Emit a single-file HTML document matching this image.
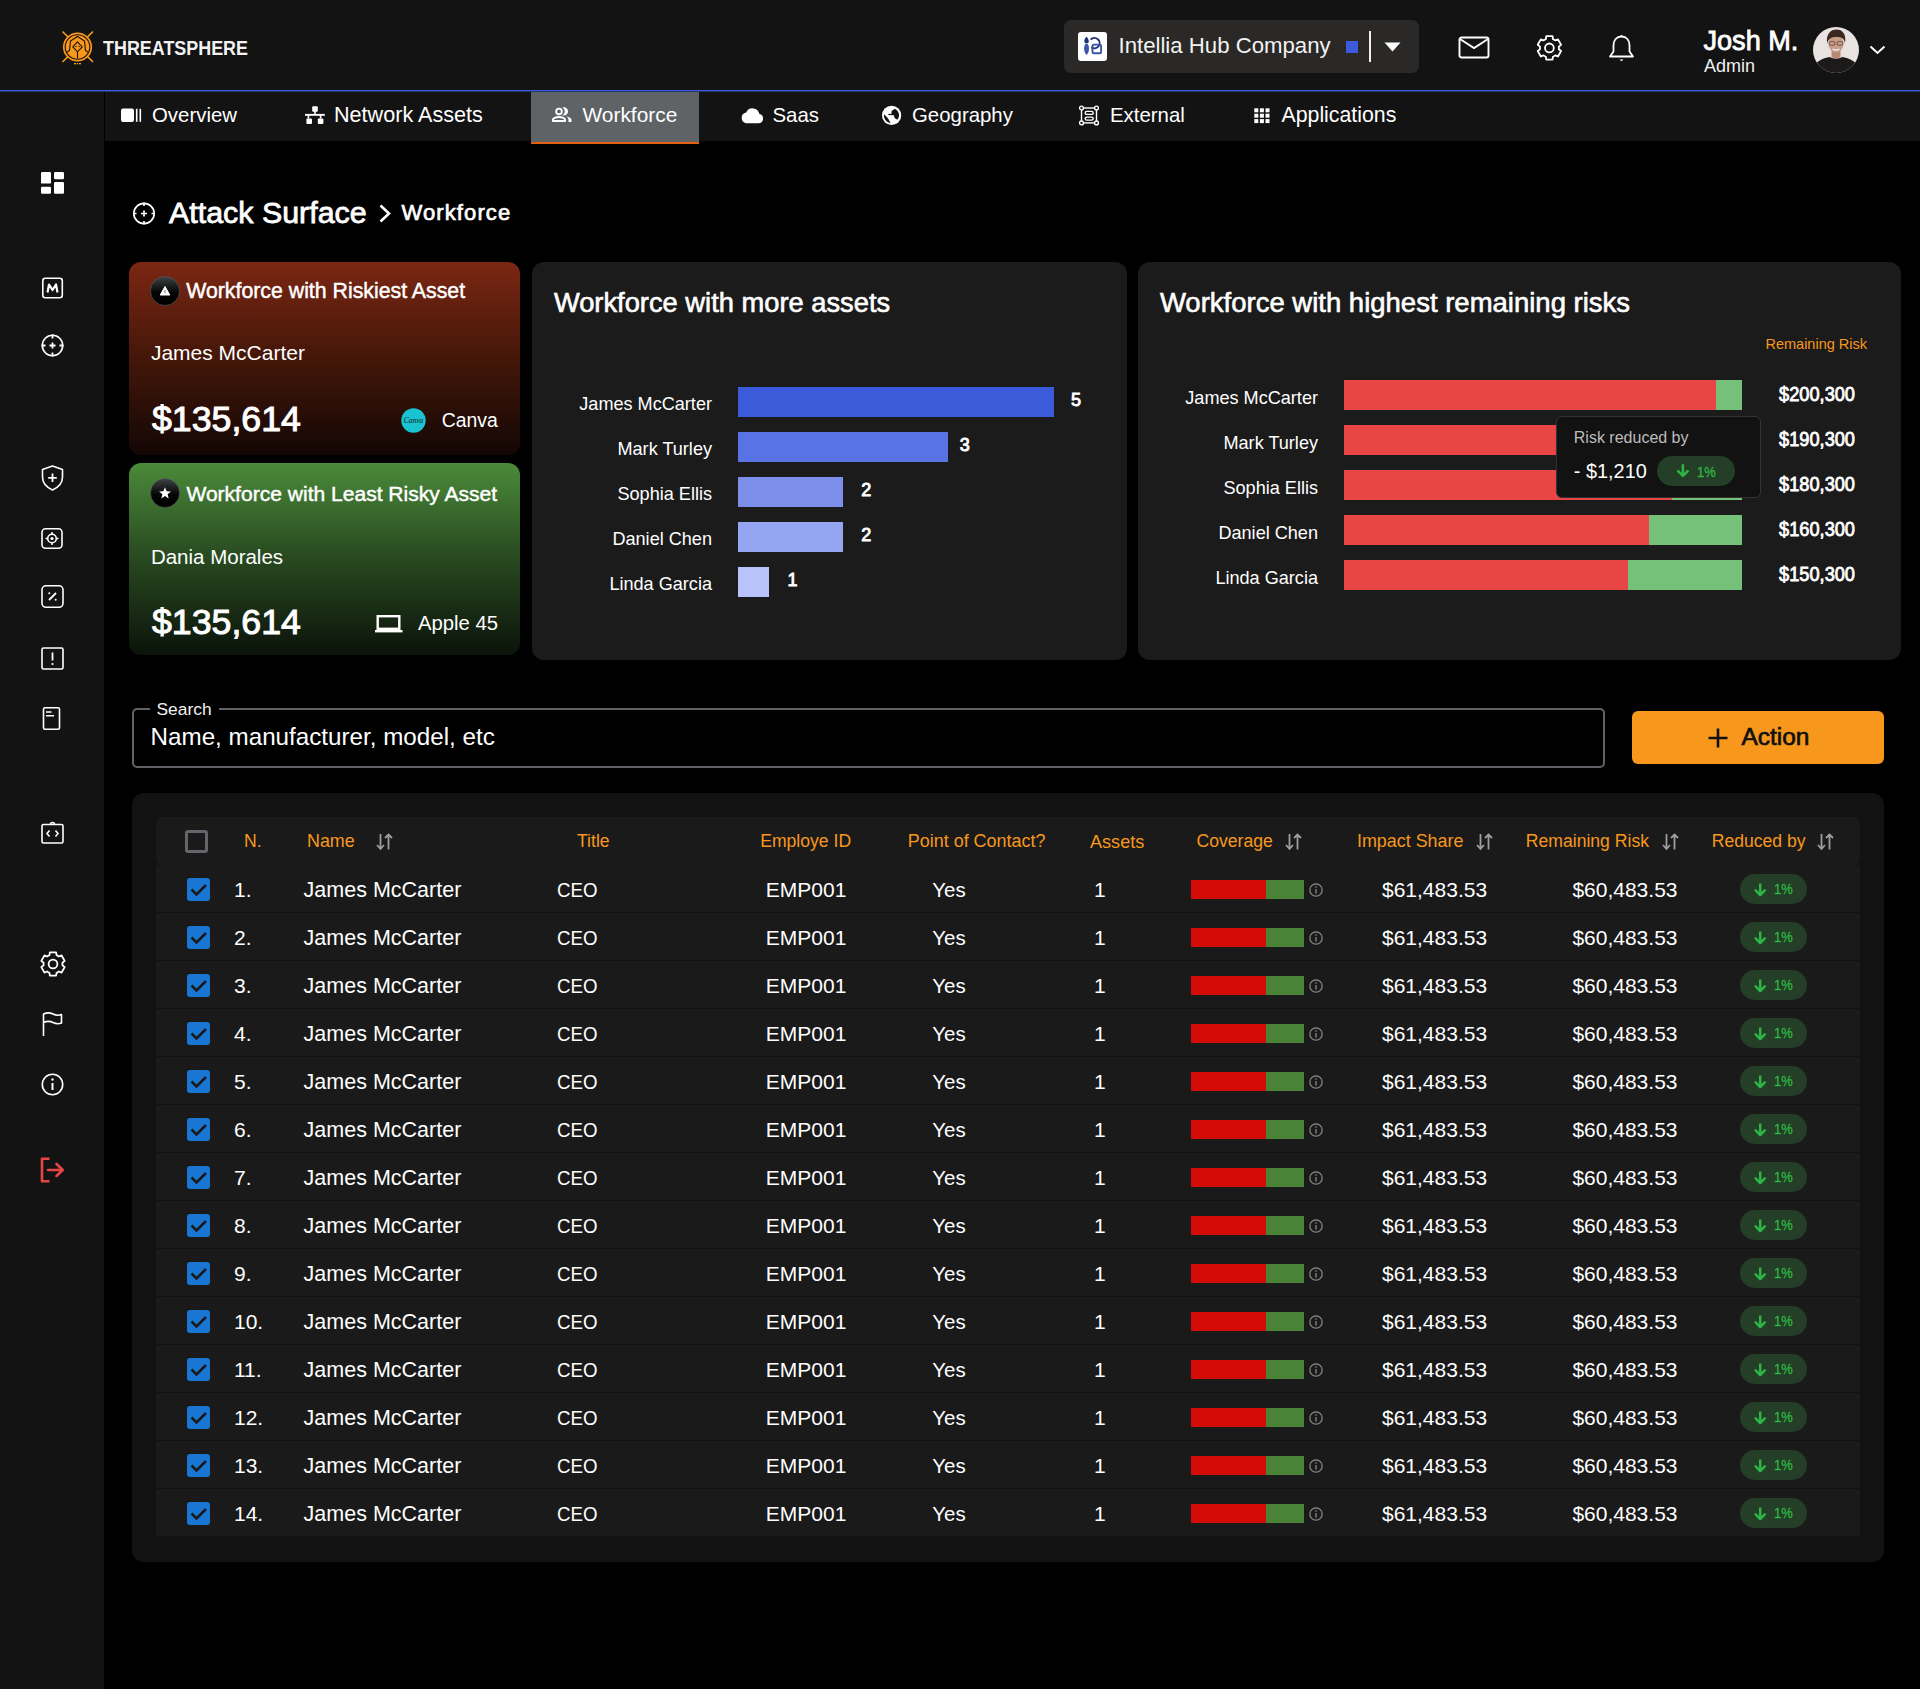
<!DOCTYPE html>
<html><head><meta charset="utf-8"><title>Workforce</title>
<style>
html,body{margin:0;padding:0;}
body{width:1920px;height:1689px;background:#000;position:relative;overflow:hidden;font-family:"Liberation Sans",sans-serif;color:#fff;}
.t{position:absolute;white-space:nowrap;}
.r{position:absolute;}
.m{-webkit-text-stroke:0.35px currentColor;}
</style></head><body>
<div class="r" style="left:0px;top:0px;width:1920px;height:90px;background:#131313;"></div>
<div class="r" style="left:0px;top:90px;width:1920px;height:1px;background:#3b5be0;"></div>
<div class="r" style="left:0px;top:91px;width:1920px;height:1px;background:#26346e;"></div>
<div class="r" style="left:0px;top:92px;width:104px;height:1597px;background:#131313;"></div>
<div class="r" style="left:105px;top:92px;width:1815px;height:49px;background:#131313;"></div>
<div class="r" style="left:531px;top:92px;width:168px;height:50px;background:#5f6366;"></div>
<div class="r" style="left:531px;top:142px;width:168px;height:2px;background:#e45f12;"></div>
<svg class="r" style="left:60px;top:28px;" width="36" height="40" viewBox="0 0 36 40">
<g stroke="#f7981d" stroke-width="1.7" stroke-linecap="round">
<line x1="3" y1="4" x2="32.5" y2="33.5"/><line x1="32.5" y1="4" x2="3" y2="33.5"/></g>
<circle cx="17.5" cy="19" r="14.6" fill="#f7981d"/>
<circle cx="17.5" cy="19" r="12.3" fill="none" stroke="#1a1108" stroke-width="1.1"/>
<path d="M6.5 24.5 L9.5 22.5 L10.5 13 L17.5 8.5 L24.5 13 L25.5 22.5 L28.5 24.5" fill="none" stroke="#1a1108" stroke-width="1.1"/>
<path d="M17.5 13.8 L22.2 19 L17.5 23.8 L12.8 19 Z" fill="none" stroke="#1a1108" stroke-width="1.1"/>
<rect x="15" y="18.2" width="1.6" height="0.8" fill="#1a1108"/><rect x="18.4" y="18.2" width="1.6" height="0.8" fill="#1a1108"/>
<line x1="17.5" y1="23.8" x2="17.5" y2="30.5" stroke="#1a1108" stroke-width="1.1"/>
<rect x="14" y="35" width="2" height="1.3" fill="#f7981d"/><rect x="16.8" y="35" width="1.4" height="1.3" fill="#f7981d"/><rect x="19" y="35" width="2" height="1.3" fill="#f7981d"/>
</svg>
<div class="t" style="top:38.35px;font-size:20.5px;line-height:20.5px;font-weight:700;color:#f2f2f2;left:103.00px;transform:scaleX(0.874);transform-origin:left;">THREATSPHERE</div>
<div class="r" style="left:1064px;top:20px;width:355px;height:53px;background:#2a2927;border-radius:7px;"></div>
<div class="r" style="left:1078px;top:32px;width:29px;height:29px;background:#fff;border-radius:3px;"></div>
<svg class="r" style="left:1078px;top:32px;" width="29" height="29" viewBox="0 0 29 29">
<path d="M8.6 4.8 C7 6.2 6.2 7.8 6.3 9.6 C6.4 10.6 7.2 11.3 8.5 11.4 C9.8 11.3 10.8 10.6 10.8 9.4 C10.8 7.8 9.8 6.2 8.6 4.8 Z" fill="#233270"/>
<path d="M8.5 11.6 C7 11.8 6.1 14 6.1 16.5 C6.1 19.5 7.4 22 8.6 22.8 C9.8 22 11 19.5 11 16.5 C11 14 10 11.8 8.5 11.6 Z" fill="#3f56a8"/>
<path d="M12.6 7.6 A5.2 5.2 0 1 1 13.2 15.2" fill="none" stroke="#26357a" stroke-width="1.9"/>
<rect x="14.5" y="12.6" width="8.6" height="8.6" rx="1.3" fill="none" stroke="#3b53a6" stroke-width="1.9"/>
</svg>
<div class="t" style="top:35.31px;font-size:22.2px;line-height:22.2px;color:#f2f2f2;left:1118.50px;">Intellia Hub Company</div>
<div class="r" style="left:1346px;top:41px;width:12px;height:12px;background:#3b5bdb;"></div>
<div class="r" style="left:1369px;top:31px;width:2px;height:31px;background:#f0f0f0;"></div>
<svg class="r" style="left:1384px;top:42px;" width="17" height="10" viewBox="0 0 17 10"><path d="M0.5 0.5 L16.5 0.5 L8.5 9.5 Z" fill="#fff"/></svg>
<svg class="r" style="left:1458px;top:36px;" width="32" height="23" viewBox="0 0 32 23"><rect x="1.5" y="1.5" width="29" height="20" rx="2" fill="none" stroke="#fff" stroke-width="1.9"/><path d="M2 3 L16 12 L30 3" fill="none" stroke="#fff" stroke-width="1.9"/></svg>
<svg class="r" style="left:1535px;top:34px;" width="29" height="28" viewBox="0 0 29 28"><g transform="translate(14.4 13.9)"><path d="M-3.56 -8.81 L-3.13 -11.69 L3.13 -11.69 L3.56 -8.81 A9.5 9.5 0 0 1 5.85 -7.49 L8.56 -8.56 L11.69 -3.13 L9.41 -1.32 A9.5 9.5 0 0 1 9.41 1.32 L11.69 3.13 L8.56 8.56 L5.85 7.49 A9.5 9.5 0 0 1 3.56 8.81 L3.13 11.69 L-3.13 11.69 L-3.56 8.81 A9.5 9.5 0 0 1 -5.85 7.49 L-8.56 8.56 L-11.69 3.13 L-9.41 1.32 A9.5 9.5 0 0 1 -9.41 -1.32 L-11.69 -3.13 L-8.56 -8.56 L-5.85 -7.49 A9.5 9.5 0 0 1 -3.56 -8.81 Z" fill="none" stroke="#fff" stroke-width="1.8" stroke-linejoin="round"/><circle r="4.4" fill="none" stroke="#fff" stroke-width="1.8"/></g></svg>
<svg class="r" style="left:1608px;top:34px;" width="27" height="28" viewBox="0 0 27 28"><path d="M13.5 2.5 c-5 0 -8 3.8 -8 8.5 v6.5 l-3.5 5 h23 l-3.5 -5 v-6.5 c0 -4.7 -3 -8.5 -8 -8.5z" fill="none" stroke="#fff" stroke-width="1.8" stroke-linejoin="round"/><path d="M11.5 25.5 h4 l-2 1.8z" fill="#fff"/><circle cx="13.5" cy="2" r="1" fill="#fff"/></svg>
<div class="t" style="top:26.86px;font-size:27.1px;line-height:27.1px;left:1703.50px;-webkit-text-stroke:0.8px currentColor;">Josh M.</div>
<div class="t" style="top:56.66px;font-size:18px;line-height:18px;color:#f0f0f0;left:1704.00px;">Admin</div>
<svg class="r" style="left:1813px;top:27px;" width="46" height="46" viewBox="0 0 46 46">
<defs><clipPath id="av"><circle cx="23" cy="23" r="23"/></clipPath></defs>
<g clip-path="url(#av)">
<rect width="46" height="46" fill="#e8e3e1"/>
<path d="M0 46 V39 C5 33.5 11 31 16.5 30 Q23 33 29.5 30 C35 31 41 33.5 46 39 V46 Z" fill="#1c1a1a"/>
<path d="M18.5 22 L18.5 30 Q23 33.5 27.5 30 L27.5 22 Z" fill="#b88a74"/>
<ellipse cx="23" cy="16.5" rx="7.6" ry="9" fill="#c99e89"/>
<path d="M14.2 16.5 C12.8 7 17.5 2.5 23.5 2.5 C29.5 2.5 33.5 7 32 16 C31 11.5 29 10 23.5 10 C18 10 15.5 11.5 14.2 16.5 Z" fill="#3a2820"/>
<rect x="16.3" y="14.6" width="5.6" height="3.6" rx="1" fill="none" stroke="#4a3a34" stroke-width="0.7"/>
<rect x="24.1" y="14.6" width="5.6" height="3.6" rx="1" fill="none" stroke="#4a3a34" stroke-width="0.7"/>
<path d="M19.5 22 q3.5 2.2 7 0" stroke="#f4f0ee" stroke-width="1.3" fill="none"/>
</g></svg>
<svg class="r" style="left:1869px;top:45px;" width="17" height="10" viewBox="0 0 17 10"><path d="M1.5 1.5 L8.5 8 L15.5 1.5" fill="none" stroke="#fff" stroke-width="2"/></svg>
<svg class="r" style="left:120px;top:107px;" width="24" height="17" viewBox="0 0 24 17"><rect x="1" y="1.6" width="13" height="13.4" rx="2" fill="#fff"/><rect x="15.9" y="1.8" width="1.6" height="13" fill="#fff"/><rect x="19.5" y="1.8" width="1.6" height="13" fill="#fff"/></svg>
<div class="t" style="top:105.43px;font-size:20.4px;line-height:20.4px;left:152.00px;">Overview</div>
<svg class="r" style="left:304px;top:105px;" width="22" height="20" viewBox="0 0 22 20"><rect x="8.2" y="1.2" width="5.6" height="5.5" rx="1" fill="#fff"/><rect x="10.2" y="6" width="1.6" height="3" fill="#fff"/><rect x="1" y="8.9" width="19.8" height="1.9" fill="#fff"/><rect x="3.6" y="10" width="1.6" height="3.6" fill="#fff"/><rect x="15.8" y="10" width="1.6" height="3.6" fill="#fff"/><rect x="2.4" y="13.6" width="5.6" height="5.3" rx="1" fill="#fff"/><rect x="13.8" y="13.6" width="5.6" height="5.3" rx="1" fill="#fff"/></svg>
<div class="t" style="top:104.42px;font-size:21.6px;line-height:21.6px;left:334.00px;">Network Assets</div>
<svg class="r" style="left:550px;top:104px;" width="24" height="20" viewBox="0 0 24 20"><circle cx="9" cy="7.4" r="2.8" fill="none" stroke="#fff" stroke-width="1.9"/>
<path d="M13.8 3.8 A3.6 3.6 0 0 1 13.8 11 A5 5 0 0 0 13.8 3.8Z" fill="#fff" stroke="#fff" stroke-width="1.2"/>
<path d="M2.9 17 v-1.2 c0 -1.2 2.8 -2.8 6.1 -2.8 s6.1 1.6 6.1 2.8 v1.2 z" fill="none" stroke="#fff" stroke-width="1.9" stroke-linejoin="round"/>
<path d="M16.4 12.4 c3 0.5 5.1 1.8 5.1 3.5 v2.1 h-3 v-2.3 c0 -1.3 -0.8 -2.4 -2.1 -3.3z" fill="#fff"/></svg>
<div class="t" style="top:105.01px;font-size:20.9px;line-height:20.9px;left:582.50px;">Workforce</div>
<svg class="r" style="left:740px;top:106px;" width="24" height="19" viewBox="0 0 24 19"><path d="M6 17.2 h12.6 a4.6 4.6 0 0 0 0.8 -9.1 a7 7 0 0 0 -13.3 -1.5 a5.4 5.4 0 0 0 -0.1 10.6z" fill="#fff"/></svg>
<div class="t" style="top:105.43px;font-size:20.4px;line-height:20.4px;left:772.50px;">Saas</div>
<svg class="r" style="left:880px;top:104px;" width="23" height="23" viewBox="0 0 23 23"><circle cx="11.6" cy="11.4" r="9.6" fill="#fff"/><path d="M3.9 10.2 A7.8 7.8 0 0 0 10.6 19.2 C9.8 17 8.6 15 7.2 13.4 C6.2 12.2 5 11 3.9 10.2 Z" fill="#131313"/><path d="M8.2 10.9 L8.6 9.8 L11.4 9.9 L11.6 7.1 L14.9 4.8 C16.8 5.8 18.3 7.6 18.9 9.8 C19.4 12 18.8 14 17.4 15.8 L14.5 14 L14 11.2 Z" fill="#131313"/></svg>
<div class="t" style="top:105.43px;font-size:20.4px;line-height:20.4px;left:912.00px;">Geography</div>
<svg class="r" style="left:1077px;top:103px;" width="24" height="24" viewBox="0 0 24 24"><g fill="none" stroke="#fff" stroke-width="1.4">
<rect x="4.5" y="5" width="15" height="14.9"/>
<circle cx="4.5" cy="5" r="1.9" fill="#131313"/><circle cx="19.5" cy="5" r="1.9" fill="#131313"/><circle cx="4.5" cy="19.9" r="1.9" fill="#131313"/><circle cx="19.5" cy="19.9" r="1.9" fill="#131313"/>
<rect x="8.2" y="8.4" width="8" height="3" rx="1.5"/><rect x="8.2" y="14.1" width="8" height="3" rx="1.5"/></g></svg>
<div class="t" style="top:105.43px;font-size:20.4px;line-height:20.4px;left:1110.00px;">External</div>
<svg class="r" style="left:1254px;top:108px;" width="16" height="16" viewBox="0 0 16 16"><rect x="0.3" y="0.3" width="4" height="4" fill="#fff"/><rect x="0.3" y="5.7" width="4" height="4" fill="#fff"/><rect x="0.3" y="11.1" width="4" height="4" fill="#fff"/><rect x="5.9" y="0.3" width="4" height="4" fill="#fff"/><rect x="5.9" y="5.7" width="4" height="4" fill="#fff"/><rect x="5.9" y="11.1" width="4" height="4" fill="#fff"/><rect x="11.5" y="0.3" width="4" height="4" fill="#fff"/><rect x="11.5" y="5.7" width="4" height="4" fill="#fff"/><rect x="11.5" y="11.1" width="4" height="4" fill="#fff"/></svg>
<div class="t" style="top:104.67px;font-size:21.3px;line-height:21.3px;left:1281.50px;">Applications</div>
<svg class="r" style="left:40px;top:171px;" width="25" height="24" viewBox="0 0 25 24"><rect x="1" y="1" width="10" height="11.6" rx="1.2" fill="#fff"/><rect x="1" y="15.8" width="10" height="7" rx="1.2" fill="#fff"/><rect x="14" y="1" width="10" height="7.3" rx="1.2" fill="#fff"/><rect x="14" y="11" width="10" height="11.8" rx="1.2" fill="#fff"/></svg>
<svg class="r" style="left:41px;top:277px;" width="23" height="23" viewBox="0 0 23 23"><rect x="1.8" y="1.3" width="19.5" height="19.5" rx="2.5" fill="none" stroke="#fff" stroke-width="1.6"/><path d="M6.5 15.5 L8 7.5 L11.5 13 L15 7.5 L16.5 15.5" fill="none" stroke="#fff" stroke-width="2.2" stroke-linejoin="round"/></svg>
<svg class="r" style="left:40px;top:333px;" width="25" height="25" viewBox="0 0 25 25"><circle cx="12.5" cy="12.5" r="10.2" fill="none" stroke="#fff" stroke-width="1.6"/><path d="M12.5 1.5 v4 M12.5 19.5 v4 M1.5 12.5 h4 M19.5 12.5 h4 M12.5 9.5 v6 M9.5 12.5 h6" stroke="#fff" stroke-width="1.8"/></svg>
<svg class="r" style="left:40px;top:464px;" width="25" height="28" viewBox="0 0 25 28"><path d="M12.5 2 L22.5 5.5 V13 C22.5 19 18 23.5 12.5 26 C7 23.5 2.5 19 2.5 13 V5.5 Z" fill="none" stroke="#fff" stroke-width="1.6" stroke-linejoin="round"/><path d="M12.5 9.5 v8.5 M8.2 13.8 h8.6" stroke="#fff" stroke-width="1.8"/></svg>
<svg class="r" style="left:40px;top:527px;" width="24" height="23" viewBox="0 0 24 23"><rect x="2" y="1.8" width="20" height="19.5" rx="3.5" fill="none" stroke="#fff" stroke-width="1.6"/><circle cx="12" cy="11.5" r="4.3" fill="none" stroke="#fff" stroke-width="1.6"/><circle cx="12" cy="11.5" r="1.6" fill="#fff"/><path d="M12 5 v2 M12 16 v2 M5.5 11.5 h2 M16.5 11.5 h2" stroke="#fff" stroke-width="1.5"/></svg>
<svg class="r" style="left:40px;top:584px;" width="25" height="26" viewBox="0 0 25 26"><rect x="2" y="1.8" width="21" height="21.5" rx="4" fill="none" stroke="#fff" stroke-width="1.6"/><path d="M9 16 L16 9" stroke="#fff" stroke-width="1.8"/><circle cx="9.3" cy="9.3" r="1" fill="#fff"/><circle cx="15.7" cy="15.7" r="1" fill="#fff"/></svg>
<svg class="r" style="left:40px;top:646px;" width="25" height="25" viewBox="0 0 25 25"><rect x="2" y="2" width="21" height="21" rx="1.5" fill="none" stroke="#fff" stroke-width="1.6"/><path d="M12.5 6.5 v8" stroke="#fff" stroke-width="1.8"/><circle cx="12.5" cy="18" r="1.1" fill="#fff"/></svg>
<svg class="r" style="left:41px;top:706px;" width="21" height="25" viewBox="0 0 21 25"><rect x="2.5" y="1.7" width="16" height="21.5" rx="1.5" fill="none" stroke="#fff" stroke-width="1.6"/><path d="M5 6 h5.5 M5 9.7 h8" stroke="#fff" stroke-width="1.5"/></svg>
<svg class="r" style="left:40px;top:820px;" width="25" height="25" viewBox="0 0 25 25"><rect x="2" y="4.5" width="21" height="18.5" rx="1.5" fill="none" stroke="#fff" stroke-width="1.6" stroke-width="1.6"/><path d="M10.5 4.5 a2 2 0 0 1 4 0" fill="none" stroke="#fff" stroke-width="1.6" stroke-width="1.4"/><path d="M9.5 10.5 L7 13.5 L9.5 16.5 M15.5 10.5 L18 13.5 L15.5 16.5" fill="none" stroke="#fff" stroke-width="1.6" stroke-width="1.6"/></svg>
<svg class="r" style="left:39px;top:950px;" width="28" height="28" viewBox="0 0 28 28"><g transform="translate(14 14)"><path d="M-3.56 -8.81 L-3.13 -11.69 L3.13 -11.69 L3.56 -8.81 A9.5 9.5 0 0 1 5.85 -7.49 L8.56 -8.56 L11.69 -3.13 L9.41 -1.32 A9.5 9.5 0 0 1 9.41 1.32 L11.69 3.13 L8.56 8.56 L5.85 7.49 A9.5 9.5 0 0 1 3.56 8.81 L3.13 11.69 L-3.13 11.69 L-3.56 8.81 A9.5 9.5 0 0 1 -5.85 7.49 L-8.56 8.56 L-11.69 3.13 L-9.41 1.32 A9.5 9.5 0 0 1 -9.41 -1.32 L-11.69 -3.13 L-8.56 -8.56 L-5.85 -7.49 A9.5 9.5 0 0 1 -3.56 -8.81 Z" fill="none" stroke="#fff" stroke-width="1.8" stroke-linejoin="round"/><circle r="4.4" fill="none" stroke="#fff" stroke-width="1.8"/></g></svg>
<svg class="r" style="left:41px;top:1011px;" width="23" height="26" viewBox="0 0 23 26"><path d="M2.5 25 V2.5 M2.5 3 C6 1.5 9 1.5 12 3 C15 4.5 18 4.5 20.5 3.5 V12 C18 13 15 13 12 11.5 C9 10 6 10 2.5 11.5" fill="none" stroke="#fff" stroke-width="1.6" stroke-linejoin="round"/></svg>
<svg class="r" style="left:40px;top:1072px;" width="25" height="25" viewBox="0 0 25 25"><circle cx="12.5" cy="12.5" r="10.2" fill="none" stroke="#fff" stroke-width="1.6"/><path d="M12.5 11 v7" stroke="#fff" stroke-width="2"/><circle cx="12.5" cy="7.5" r="1.2" fill="#fff"/></svg>
<svg class="r" style="left:39px;top:1156px;" width="27" height="28" viewBox="0 0 27 28"><path d="M10.5 2.8 H3 V25.2 H10.5" fill="none" stroke="#e84545" stroke-width="2.6" stroke-linejoin="round"/><path d="M9 14 H23.5 M17.5 8 L23.8 14 L17.5 20" fill="none" stroke="#e84545" stroke-width="2.6" stroke-linecap="round" stroke-linejoin="round"/></svg>
<svg class="r" style="left:131px;top:201px;" width="26" height="26" viewBox="0 0 26 26"><circle cx="13" cy="12.5" r="10.2" fill="none" stroke="#fff" stroke-width="1.7"/><path d="M13 1.5 v3.5 M13 20 v3.5 M2 12.5 h3.5 M20.5 12.5 h3.5 M13 9.5 v6 M10 12.5 h6" stroke="#fff" stroke-width="1.7"/></svg>
<div class="t" style="top:197.17px;font-size:30.4px;line-height:30.4px;left:169.00px;-webkit-text-stroke:0.8px currentColor;">Attack Surface</div>
<svg class="r" style="left:377px;top:203px;" width="16" height="21" viewBox="0 0 16 21"><path d="M3.5 2.5 L12 10.5 L3.5 18.5" fill="none" stroke="#fff" stroke-width="2.6"/></svg>
<div class="t" style="top:201.78px;font-size:22px;line-height:22px;left:401.50px;-webkit-text-stroke:0.7px currentColor;letter-spacing:1.1px;">Workforce</div>
<div class="r" style="left:129px;top:262px;width:391px;height:193px;background:linear-gradient(180deg,#7b2713 0%,#461709 48%,#130705 100%);border-radius:12px;"></div>
<div class="r" style="left:129px;top:463px;width:391px;height:192px;background:linear-gradient(180deg,#4b8a3a 0%,#294b21 48%,#0b130a 100%);border-radius:12px;"></div>
<svg class="r" style="left:150px;top:276px;" width="30" height="30" viewBox="0 0 30 30"><defs><linearGradient id="ig1" x1="0" y1="0" x2="0" y2="1"><stop offset="0" stop-color="#3f4344"/><stop offset="0.55" stop-color="#050505"/><stop offset="1" stop-color="#000"/></linearGradient></defs><circle cx="15" cy="15" r="14.5" fill="url(#ig1)" stroke="#5a6265" stroke-width="0.6"/><path d="M15 10.5 L19.8 19 H10.2 Z" fill="#fff" stroke="#fff" stroke-width="1" stroke-linejoin="round"/><rect x="14.4" y="14" width="1.2" height="3.2" fill="#888"/></svg>
<div class="t" style="top:281.47px;font-size:21.3px;line-height:21.3px;left:186.20px;-webkit-text-stroke:0.45px currentColor;">Workforce with Riskiest Asset</div>
<div class="t" style="top:342.32px;font-size:21px;line-height:21px;left:150.90px;">James McCarter</div>
<div class="t" style="top:401.68px;font-size:35.7px;line-height:35.7px;left:152.00px;-webkit-text-stroke:1.0px currentColor;">$135,614</div>
<svg class="r" style="left:401px;top:408px;" width="25" height="25" viewBox="0 0 25 25"><circle cx="12.5" cy="12.5" r="12.2" fill="#19c3cf"/><text x="12.5" y="15" font-family="Liberation Serif" font-style="italic" font-size="7.5" text-anchor="middle" fill="#102020">Canva</text></svg>
<div class="t" style="top:410.98px;font-size:19.4px;line-height:19.4px;left:441.80px;">Canva</div>
<svg class="r" style="left:150px;top:478px;" width="30" height="30" viewBox="0 0 30 30"><defs><linearGradient id="ig2" x1="0" y1="0" x2="0" y2="1"><stop offset="0" stop-color="#3f4344"/><stop offset="0.55" stop-color="#050505"/><stop offset="1" stop-color="#000"/></linearGradient></defs><circle cx="15" cy="15" r="14.5" fill="url(#ig2)" stroke="#5a6265" stroke-width="0.6"/><path d="M15 9.3 L16.6 13.3 L20.9 13.5 L17.6 16.2 L18.7 20.4 L15 18 L11.3 20.4 L12.4 16.2 L9.1 13.5 L13.4 13.3 Z" fill="#fff"/></svg>
<div class="t" style="top:482.88px;font-size:21.05px;line-height:21.05px;left:186.40px;-webkit-text-stroke:0.45px currentColor;">Workforce with Least Risky Asset</div>
<div class="t" style="top:547.15px;font-size:20.5px;line-height:20.5px;left:150.90px;">Dania Morales</div>
<div class="t" style="top:604.68px;font-size:35.7px;line-height:35.7px;left:152.00px;-webkit-text-stroke:1.0px currentColor;">$135,614</div>
<svg class="r" style="left:374px;top:613px;" width="30" height="21" viewBox="0 0 30 21"><rect x="3.7" y="3.2" width="21.6" height="12.6" fill="none" stroke="#fff" stroke-width="2.4"/><rect x="1" y="17" width="27.5" height="2.4" fill="#fff"/></svg>
<div class="t" style="top:613.12px;font-size:20.3px;line-height:20.3px;left:418.00px;">Apple 45</div>
<div class="r" style="left:532px;top:262px;width:595px;height:398px;background:#1b1b1b;border-radius:12px;"></div>
<div class="t" style="top:288.79px;font-size:27.3px;line-height:27.3px;left:553.90px;-webkit-text-stroke:0.6px currentColor;">Workforce with more assets</div>
<div class="r" style="left:738px;top:387px;width:316px;height:30px;background:#3b5bdb;"></div>
<div class="t" style="top:395.18px;font-size:18.1px;line-height:18.1px;left:-288.00px;width:1000px;text-align:right;">James McCarter</div>
<div class="t" style="top:391.26px;font-size:18px;line-height:18px;left:1071.00px;-webkit-text-stroke:0.9px currentColor;">5</div>
<div class="r" style="left:738px;top:432px;width:210px;height:30px;background:#5a73e4;"></div>
<div class="t" style="top:440.18px;font-size:18.1px;line-height:18.1px;left:-288.00px;width:1000px;text-align:right;">Mark Turley</div>
<div class="t" style="top:436.26px;font-size:18px;line-height:18px;left:959.80px;-webkit-text-stroke:0.9px currentColor;">3</div>
<div class="r" style="left:738px;top:477px;width:105px;height:30px;background:#7a8eea;"></div>
<div class="t" style="top:485.18px;font-size:18.1px;line-height:18.1px;left:-288.00px;width:1000px;text-align:right;">Sophia Ellis</div>
<div class="t" style="top:481.26px;font-size:18px;line-height:18px;left:861.20px;-webkit-text-stroke:0.9px currentColor;">2</div>
<div class="r" style="left:738px;top:522px;width:105px;height:30px;background:#94a6f2;"></div>
<div class="t" style="top:530.18px;font-size:18.1px;line-height:18.1px;left:-288.00px;width:1000px;text-align:right;">Daniel Chen</div>
<div class="t" style="top:526.26px;font-size:18px;line-height:18px;left:861.20px;-webkit-text-stroke:0.9px currentColor;">2</div>
<div class="r" style="left:738px;top:567px;width:31px;height:30px;background:#b8c3fb;"></div>
<div class="t" style="top:575.18px;font-size:18.1px;line-height:18.1px;left:-288.00px;width:1000px;text-align:right;">Linda Garcia</div>
<div class="t" style="top:571.26px;font-size:18px;line-height:18px;left:787.60px;-webkit-text-stroke:0.9px currentColor;">1</div>
<div class="r" style="left:1138px;top:262px;width:763px;height:398px;background:#1b1b1b;border-radius:12px;"></div>
<div class="t" style="top:288.72px;font-size:27.5px;line-height:27.5px;left:1159.90px;-webkit-text-stroke:0.6px currentColor;">Workforce with highest remaining risks</div>
<div class="t" style="top:337.33px;font-size:14.5px;line-height:14.5px;color:#f7981d;left:867.00px;width:1000px;text-align:right;">Remaining Risk</div>
<div class="r" style="left:1344px;top:380px;width:372px;height:30px;background:#e84545;"></div>
<div class="r" style="left:1716px;top:380px;width:26px;height:30px;background:#76c17a;"></div>
<div class="t" style="top:388.88px;font-size:18.1px;line-height:18.1px;left:318.00px;width:1000px;text-align:right;">James McCarter</div>
<div class="t" style="top:384.27px;font-size:20px;line-height:20px;left:855.00px;width:1000px;text-align:right;-webkit-text-stroke:0.8px currentColor;transform:scaleX(0.91);transform-origin:right;">$200,300</div>
<div class="r" style="left:1344px;top:425px;width:346px;height:30px;background:#e84545;"></div>
<div class="r" style="left:1690px;top:425px;width:52px;height:30px;background:#76c17a;"></div>
<div class="t" style="top:433.88px;font-size:18.1px;line-height:18.1px;left:318.00px;width:1000px;text-align:right;">Mark Turley</div>
<div class="t" style="top:429.27px;font-size:20px;line-height:20px;left:855.00px;width:1000px;text-align:right;-webkit-text-stroke:0.8px currentColor;transform:scaleX(0.91);transform-origin:right;">$190,300</div>
<div class="r" style="left:1344px;top:470px;width:328px;height:30px;background:#e84545;"></div>
<div class="r" style="left:1672px;top:470px;width:70px;height:30px;background:#76c17a;"></div>
<div class="t" style="top:478.88px;font-size:18.1px;line-height:18.1px;left:318.00px;width:1000px;text-align:right;">Sophia Ellis</div>
<div class="t" style="top:474.27px;font-size:20px;line-height:20px;left:855.00px;width:1000px;text-align:right;-webkit-text-stroke:0.8px currentColor;transform:scaleX(0.91);transform-origin:right;">$180,300</div>
<div class="r" style="left:1344px;top:515px;width:305px;height:30px;background:#e84545;"></div>
<div class="r" style="left:1649px;top:515px;width:93px;height:30px;background:#76c17a;"></div>
<div class="t" style="top:523.88px;font-size:18.1px;line-height:18.1px;left:318.00px;width:1000px;text-align:right;">Daniel Chen</div>
<div class="t" style="top:519.27px;font-size:20px;line-height:20px;left:855.00px;width:1000px;text-align:right;-webkit-text-stroke:0.8px currentColor;transform:scaleX(0.91);transform-origin:right;">$160,300</div>
<div class="r" style="left:1344px;top:560px;width:284px;height:30px;background:#e84545;"></div>
<div class="r" style="left:1628px;top:560px;width:114px;height:30px;background:#76c17a;"></div>
<div class="t" style="top:568.88px;font-size:18.1px;line-height:18.1px;left:318.00px;width:1000px;text-align:right;">Linda Garcia</div>
<div class="t" style="top:564.27px;font-size:20px;line-height:20px;left:855.00px;width:1000px;text-align:right;-webkit-text-stroke:0.8px currentColor;transform:scaleX(0.91);transform-origin:right;">$150,300</div>
<div class="r" style="left:1556px;top:416px;width:205px;height:82px;background:#121212;border-radius:6px;border:1px solid #333;box-sizing:border-box;"></div>
<div class="t" style="top:429.66px;font-size:16px;line-height:16px;color:#bdbdbd;left:1573.80px;">Risk reduced by</div>
<div class="t" style="top:462.35px;font-size:19.9px;line-height:19.9px;left:1573.80px;">- $1,210</div>
<div class="r" style="left:1657px;top:456px;width:78px;height:30px;background:#243e27;border-radius:15px;"></div>
<svg class="r" style="left:1675px;top:462px;" width="17" height="17" viewBox="0 0 17 17"><path d="M7.9 3.2 V13.6 M3.1 9.1 L7.9 13.9 L12.7 9.1" fill="none" stroke="#2fb344" stroke-width="2.6" stroke-linecap="round" stroke-linejoin="round"/></svg>
<div class="t" style="top:464.30px;font-size:15px;line-height:15px;color:#2fb344;left:1696.50px;-webkit-text-stroke:0.35px currentColor;transform:scaleX(0.86);transform-origin:left;">1%</div>
<div class="r" style="left:132px;top:708px;width:1473px;height:60px;background:transparent;border-radius:5px;border:2px solid #5f6368;box-sizing:border-box;"></div>
<div class="r" style="left:150px;top:700px;width:69px;height:14px;background:#000;"></div>
<div class="t" style="top:700.87px;font-size:17.4px;line-height:17.4px;color:#f0f0f0;left:156.50px;">Search</div>
<div class="t" style="top:725.21px;font-size:24.2px;line-height:24.2px;left:150.60px;">Name, manufacturer, model, etc</div>
<div class="r" style="left:1632px;top:711px;width:252px;height:53px;background:#f7981d;border-radius:6px;"></div>
<svg class="r" style="left:1706px;top:726px;" width="24" height="24" viewBox="0 0 24 24"><path d="M12 2.5 V21.5 M2.5 12 H21.5" stroke="#111" stroke-width="2.6"/></svg>
<div class="t" style="top:724.65px;font-size:24.4px;line-height:24.4px;color:#111;left:1741.50px;-webkit-text-stroke:0.7px currentColor;">Action</div>
<div class="r" style="left:132px;top:793px;width:1752px;height:769px;background:#121212;border-radius:12px;"></div>
<div class="r" style="left:156px;top:817px;width:1704px;height:48px;background:#1a1a1a;border-radius:6px;"></div>
<div class="r" style="left:185px;top:830px;width:23px;height:23px;background:transparent;border-radius:3px;border:3px solid #62666a;box-sizing:border-box;"></div>
<div class="t" style="top:833.10px;font-size:17.6px;line-height:17.6px;color:#f7981d;left:244.00px;">N.</div>
<div class="t" style="top:832.85px;font-size:17.9px;line-height:17.9px;color:#f7981d;left:307.00px;">Name</div>
<svg class="r" style="left:376px;top:833px;" width="18" height="18" viewBox="0 0 18 18"><path d="M4.5 1 V16 M1 12 L4.5 16 L8 12 M12.5 16.5 V1.5 M9 5 L12.5 1.5 L16 5" fill="none" stroke="#9e9e9e" stroke-width="1.8"/></svg>
<div class="t" style="top:833.10px;font-size:17.6px;line-height:17.6px;color:#f7981d;left:577.00px;">Title</div>
<div class="t" style="top:833.10px;font-size:17.6px;line-height:17.6px;color:#f7981d;left:760.20px;">Employe ID</div>
<div class="t" style="top:832.81px;font-size:17.95px;line-height:17.95px;color:#f7981d;left:907.80px;">Point of Contact?</div>
<div class="t" style="top:832.68px;font-size:18.1px;line-height:18.1px;color:#f7981d;left:1090.00px;">Assets</div>
<div class="t" style="top:833.10px;font-size:17.6px;line-height:17.6px;color:#f7981d;left:1196.50px;">Coverage</div>
<svg class="r" style="left:1285px;top:833px;" width="18" height="18" viewBox="0 0 18 18"><path d="M4.5 1 V16 M1 12 L4.5 16 L8 12 M12.5 16.5 V1.5 M9 5 L12.5 1.5 L16 5" fill="none" stroke="#9e9e9e" stroke-width="1.8"/></svg>
<div class="t" style="top:832.85px;font-size:17.9px;line-height:17.9px;color:#f7981d;left:1357.00px;">Impact Share</div>
<svg class="r" style="left:1476px;top:833px;" width="18" height="18" viewBox="0 0 18 18"><path d="M4.5 1 V16 M1 12 L4.5 16 L8 12 M12.5 16.5 V1.5 M9 5 L12.5 1.5 L16 5" fill="none" stroke="#9e9e9e" stroke-width="1.8"/></svg>
<div class="t" style="top:833.10px;font-size:17.6px;line-height:17.6px;color:#f7981d;left:1525.80px;">Remaining Risk</div>
<svg class="r" style="left:1662px;top:833px;" width="18" height="18" viewBox="0 0 18 18"><path d="M4.5 1 V16 M1 12 L4.5 16 L8 12 M12.5 16.5 V1.5 M9 5 L12.5 1.5 L16 5" fill="none" stroke="#9e9e9e" stroke-width="1.8"/></svg>
<div class="t" style="top:833.10px;font-size:17.6px;line-height:17.6px;color:#f7981d;left:1711.70px;">Reduced by</div>
<svg class="r" style="left:1817px;top:833px;" width="18" height="18" viewBox="0 0 18 18"><path d="M4.5 1 V16 M1 12 L4.5 16 L8 12 M12.5 16.5 V1.5 M9 5 L12.5 1.5 L16 5" fill="none" stroke="#9e9e9e" stroke-width="1.8"/></svg>
<div class="r" style="left:156px;top:865px;width:1704px;height:47px;background:#1a1a1a;"></div>
<div class="r" style="left:156px;top:912px;width:1704px;height:1px;background:#170f0f;"></div>
<svg class="r" style="left:187px;top:878px;" width="23" height="23" viewBox="0 0 23 23"><rect x="0" y="0" width="23" height="23" rx="3" fill="#1976d2"/><path d="M4.5 11.5 L9.5 16.5 L19 7" fill="none" stroke="#1a1a1a" stroke-width="2.6"/></svg>
<div class="t" style="top:879.22px;font-size:21px;line-height:21px;left:234.00px;">1.</div>
<div class="t" style="top:879.80px;font-size:21.5px;line-height:21.5px;left:303.60px;">James McCarter</div>
<div class="t" style="top:879.22px;font-size:21px;line-height:21px;left:556.50px;transform:scaleX(0.89);transform-origin:left;">CEO</div>
<div class="t" style="top:879.22px;font-size:21px;line-height:21px;left:765.80px;">EMP001</div>
<div class="t" style="top:879.65px;font-size:20.5px;line-height:20.5px;left:932.20px;">Yes</div>
<div class="t" style="top:879.22px;font-size:21px;line-height:21px;left:1094.00px;">1</div>
<div class="r" style="left:1191px;top:880px;width:75px;height:19px;background:#d50b08;"></div>
<div class="r" style="left:1266px;top:880px;width:38px;height:19px;background:#4a8238;"></div>
<svg class="r" style="left:1308px;top:882px;" width="16" height="16" viewBox="0 0 16 16"><circle cx="8" cy="8" r="6.2" fill="none" stroke="#8a8a8a" stroke-width="1.2"/><path d="M8 7 V11.5" stroke="#8a8a8a" stroke-width="1.3"/><circle cx="8" cy="4.9" r="0.8" fill="#8a8a8a"/></svg>
<div class="t" style="top:879.22px;font-size:21px;line-height:21px;left:1382.00px;">$61,483.53</div>
<div class="t" style="top:879.22px;font-size:21px;line-height:21px;left:1572.40px;">$60,483.53</div>
<div class="r" style="left:1740px;top:874px;width:67px;height:30px;background:#243e27;border-radius:15px;"></div>
<svg class="r" style="left:1752px;top:882px;" width="17" height="17" viewBox="0 0 17 17"><path d="M8.2 2.6 V12.6 M3.6 8.4 L8.2 13 L12.8 8.4" fill="none" stroke="#2fb344" stroke-width="2.5" stroke-linecap="round" stroke-linejoin="round"/></svg>
<div class="t" style="top:881.40px;font-size:15px;line-height:15px;color:#2fb344;left:1774.20px;-webkit-text-stroke:0.35px currentColor;transform:scaleX(0.86);transform-origin:left;">1%</div>
<div class="r" style="left:156px;top:913px;width:1704px;height:47px;background:#1a1a1a;"></div>
<div class="r" style="left:156px;top:960px;width:1704px;height:1px;background:#170f0f;"></div>
<svg class="r" style="left:187px;top:926px;" width="23" height="23" viewBox="0 0 23 23"><rect x="0" y="0" width="23" height="23" rx="3" fill="#1976d2"/><path d="M4.5 11.5 L9.5 16.5 L19 7" fill="none" stroke="#1a1a1a" stroke-width="2.6"/></svg>
<div class="t" style="top:927.22px;font-size:21px;line-height:21px;left:234.00px;">2.</div>
<div class="t" style="top:927.80px;font-size:21.5px;line-height:21.5px;left:303.60px;">James McCarter</div>
<div class="t" style="top:927.22px;font-size:21px;line-height:21px;left:556.50px;transform:scaleX(0.89);transform-origin:left;">CEO</div>
<div class="t" style="top:927.22px;font-size:21px;line-height:21px;left:765.80px;">EMP001</div>
<div class="t" style="top:927.65px;font-size:20.5px;line-height:20.5px;left:932.20px;">Yes</div>
<div class="t" style="top:927.22px;font-size:21px;line-height:21px;left:1094.00px;">1</div>
<div class="r" style="left:1191px;top:928px;width:75px;height:19px;background:#d50b08;"></div>
<div class="r" style="left:1266px;top:928px;width:38px;height:19px;background:#4a8238;"></div>
<svg class="r" style="left:1308px;top:930px;" width="16" height="16" viewBox="0 0 16 16"><circle cx="8" cy="8" r="6.2" fill="none" stroke="#8a8a8a" stroke-width="1.2"/><path d="M8 7 V11.5" stroke="#8a8a8a" stroke-width="1.3"/><circle cx="8" cy="4.9" r="0.8" fill="#8a8a8a"/></svg>
<div class="t" style="top:927.22px;font-size:21px;line-height:21px;left:1382.00px;">$61,483.53</div>
<div class="t" style="top:927.22px;font-size:21px;line-height:21px;left:1572.40px;">$60,483.53</div>
<div class="r" style="left:1740px;top:922px;width:67px;height:30px;background:#243e27;border-radius:15px;"></div>
<svg class="r" style="left:1752px;top:930px;" width="17" height="17" viewBox="0 0 17 17"><path d="M8.2 2.6 V12.6 M3.6 8.4 L8.2 13 L12.8 8.4" fill="none" stroke="#2fb344" stroke-width="2.5" stroke-linecap="round" stroke-linejoin="round"/></svg>
<div class="t" style="top:929.40px;font-size:15px;line-height:15px;color:#2fb344;left:1774.20px;-webkit-text-stroke:0.35px currentColor;transform:scaleX(0.86);transform-origin:left;">1%</div>
<div class="r" style="left:156px;top:961px;width:1704px;height:47px;background:#1a1a1a;"></div>
<div class="r" style="left:156px;top:1008px;width:1704px;height:1px;background:#170f0f;"></div>
<svg class="r" style="left:187px;top:974px;" width="23" height="23" viewBox="0 0 23 23"><rect x="0" y="0" width="23" height="23" rx="3" fill="#1976d2"/><path d="M4.5 11.5 L9.5 16.5 L19 7" fill="none" stroke="#1a1a1a" stroke-width="2.6"/></svg>
<div class="t" style="top:975.22px;font-size:21px;line-height:21px;left:234.00px;">3.</div>
<div class="t" style="top:975.80px;font-size:21.5px;line-height:21.5px;left:303.60px;">James McCarter</div>
<div class="t" style="top:975.22px;font-size:21px;line-height:21px;left:556.50px;transform:scaleX(0.89);transform-origin:left;">CEO</div>
<div class="t" style="top:975.22px;font-size:21px;line-height:21px;left:765.80px;">EMP001</div>
<div class="t" style="top:975.65px;font-size:20.5px;line-height:20.5px;left:932.20px;">Yes</div>
<div class="t" style="top:975.22px;font-size:21px;line-height:21px;left:1094.00px;">1</div>
<div class="r" style="left:1191px;top:976px;width:75px;height:19px;background:#d50b08;"></div>
<div class="r" style="left:1266px;top:976px;width:38px;height:19px;background:#4a8238;"></div>
<svg class="r" style="left:1308px;top:978px;" width="16" height="16" viewBox="0 0 16 16"><circle cx="8" cy="8" r="6.2" fill="none" stroke="#8a8a8a" stroke-width="1.2"/><path d="M8 7 V11.5" stroke="#8a8a8a" stroke-width="1.3"/><circle cx="8" cy="4.9" r="0.8" fill="#8a8a8a"/></svg>
<div class="t" style="top:975.22px;font-size:21px;line-height:21px;left:1382.00px;">$61,483.53</div>
<div class="t" style="top:975.22px;font-size:21px;line-height:21px;left:1572.40px;">$60,483.53</div>
<div class="r" style="left:1740px;top:970px;width:67px;height:30px;background:#243e27;border-radius:15px;"></div>
<svg class="r" style="left:1752px;top:978px;" width="17" height="17" viewBox="0 0 17 17"><path d="M8.2 2.6 V12.6 M3.6 8.4 L8.2 13 L12.8 8.4" fill="none" stroke="#2fb344" stroke-width="2.5" stroke-linecap="round" stroke-linejoin="round"/></svg>
<div class="t" style="top:977.40px;font-size:15px;line-height:15px;color:#2fb344;left:1774.20px;-webkit-text-stroke:0.35px currentColor;transform:scaleX(0.86);transform-origin:left;">1%</div>
<div class="r" style="left:156px;top:1009px;width:1704px;height:47px;background:#1a1a1a;"></div>
<div class="r" style="left:156px;top:1056px;width:1704px;height:1px;background:#170f0f;"></div>
<svg class="r" style="left:187px;top:1022px;" width="23" height="23" viewBox="0 0 23 23"><rect x="0" y="0" width="23" height="23" rx="3" fill="#1976d2"/><path d="M4.5 11.5 L9.5 16.5 L19 7" fill="none" stroke="#1a1a1a" stroke-width="2.6"/></svg>
<div class="t" style="top:1023.22px;font-size:21px;line-height:21px;left:234.00px;">4.</div>
<div class="t" style="top:1023.80px;font-size:21.5px;line-height:21.5px;left:303.60px;">James McCarter</div>
<div class="t" style="top:1023.22px;font-size:21px;line-height:21px;left:556.50px;transform:scaleX(0.89);transform-origin:left;">CEO</div>
<div class="t" style="top:1023.22px;font-size:21px;line-height:21px;left:765.80px;">EMP001</div>
<div class="t" style="top:1023.65px;font-size:20.5px;line-height:20.5px;left:932.20px;">Yes</div>
<div class="t" style="top:1023.22px;font-size:21px;line-height:21px;left:1094.00px;">1</div>
<div class="r" style="left:1191px;top:1024px;width:75px;height:19px;background:#d50b08;"></div>
<div class="r" style="left:1266px;top:1024px;width:38px;height:19px;background:#4a8238;"></div>
<svg class="r" style="left:1308px;top:1026px;" width="16" height="16" viewBox="0 0 16 16"><circle cx="8" cy="8" r="6.2" fill="none" stroke="#8a8a8a" stroke-width="1.2"/><path d="M8 7 V11.5" stroke="#8a8a8a" stroke-width="1.3"/><circle cx="8" cy="4.9" r="0.8" fill="#8a8a8a"/></svg>
<div class="t" style="top:1023.22px;font-size:21px;line-height:21px;left:1382.00px;">$61,483.53</div>
<div class="t" style="top:1023.22px;font-size:21px;line-height:21px;left:1572.40px;">$60,483.53</div>
<div class="r" style="left:1740px;top:1018px;width:67px;height:30px;background:#243e27;border-radius:15px;"></div>
<svg class="r" style="left:1752px;top:1026px;" width="17" height="17" viewBox="0 0 17 17"><path d="M8.2 2.6 V12.6 M3.6 8.4 L8.2 13 L12.8 8.4" fill="none" stroke="#2fb344" stroke-width="2.5" stroke-linecap="round" stroke-linejoin="round"/></svg>
<div class="t" style="top:1025.40px;font-size:15px;line-height:15px;color:#2fb344;left:1774.20px;-webkit-text-stroke:0.35px currentColor;transform:scaleX(0.86);transform-origin:left;">1%</div>
<div class="r" style="left:156px;top:1057px;width:1704px;height:47px;background:#1a1a1a;"></div>
<div class="r" style="left:156px;top:1104px;width:1704px;height:1px;background:#170f0f;"></div>
<svg class="r" style="left:187px;top:1070px;" width="23" height="23" viewBox="0 0 23 23"><rect x="0" y="0" width="23" height="23" rx="3" fill="#1976d2"/><path d="M4.5 11.5 L9.5 16.5 L19 7" fill="none" stroke="#1a1a1a" stroke-width="2.6"/></svg>
<div class="t" style="top:1071.22px;font-size:21px;line-height:21px;left:234.00px;">5.</div>
<div class="t" style="top:1071.80px;font-size:21.5px;line-height:21.5px;left:303.60px;">James McCarter</div>
<div class="t" style="top:1071.22px;font-size:21px;line-height:21px;left:556.50px;transform:scaleX(0.89);transform-origin:left;">CEO</div>
<div class="t" style="top:1071.22px;font-size:21px;line-height:21px;left:765.80px;">EMP001</div>
<div class="t" style="top:1071.65px;font-size:20.5px;line-height:20.5px;left:932.20px;">Yes</div>
<div class="t" style="top:1071.22px;font-size:21px;line-height:21px;left:1094.00px;">1</div>
<div class="r" style="left:1191px;top:1072px;width:75px;height:19px;background:#d50b08;"></div>
<div class="r" style="left:1266px;top:1072px;width:38px;height:19px;background:#4a8238;"></div>
<svg class="r" style="left:1308px;top:1074px;" width="16" height="16" viewBox="0 0 16 16"><circle cx="8" cy="8" r="6.2" fill="none" stroke="#8a8a8a" stroke-width="1.2"/><path d="M8 7 V11.5" stroke="#8a8a8a" stroke-width="1.3"/><circle cx="8" cy="4.9" r="0.8" fill="#8a8a8a"/></svg>
<div class="t" style="top:1071.22px;font-size:21px;line-height:21px;left:1382.00px;">$61,483.53</div>
<div class="t" style="top:1071.22px;font-size:21px;line-height:21px;left:1572.40px;">$60,483.53</div>
<div class="r" style="left:1740px;top:1066px;width:67px;height:30px;background:#243e27;border-radius:15px;"></div>
<svg class="r" style="left:1752px;top:1074px;" width="17" height="17" viewBox="0 0 17 17"><path d="M8.2 2.6 V12.6 M3.6 8.4 L8.2 13 L12.8 8.4" fill="none" stroke="#2fb344" stroke-width="2.5" stroke-linecap="round" stroke-linejoin="round"/></svg>
<div class="t" style="top:1073.40px;font-size:15px;line-height:15px;color:#2fb344;left:1774.20px;-webkit-text-stroke:0.35px currentColor;transform:scaleX(0.86);transform-origin:left;">1%</div>
<div class="r" style="left:156px;top:1105px;width:1704px;height:47px;background:#1a1a1a;"></div>
<div class="r" style="left:156px;top:1152px;width:1704px;height:1px;background:#170f0f;"></div>
<svg class="r" style="left:187px;top:1118px;" width="23" height="23" viewBox="0 0 23 23"><rect x="0" y="0" width="23" height="23" rx="3" fill="#1976d2"/><path d="M4.5 11.5 L9.5 16.5 L19 7" fill="none" stroke="#1a1a1a" stroke-width="2.6"/></svg>
<div class="t" style="top:1119.22px;font-size:21px;line-height:21px;left:234.00px;">6.</div>
<div class="t" style="top:1119.80px;font-size:21.5px;line-height:21.5px;left:303.60px;">James McCarter</div>
<div class="t" style="top:1119.22px;font-size:21px;line-height:21px;left:556.50px;transform:scaleX(0.89);transform-origin:left;">CEO</div>
<div class="t" style="top:1119.22px;font-size:21px;line-height:21px;left:765.80px;">EMP001</div>
<div class="t" style="top:1119.65px;font-size:20.5px;line-height:20.5px;left:932.20px;">Yes</div>
<div class="t" style="top:1119.22px;font-size:21px;line-height:21px;left:1094.00px;">1</div>
<div class="r" style="left:1191px;top:1120px;width:75px;height:19px;background:#d50b08;"></div>
<div class="r" style="left:1266px;top:1120px;width:38px;height:19px;background:#4a8238;"></div>
<svg class="r" style="left:1308px;top:1122px;" width="16" height="16" viewBox="0 0 16 16"><circle cx="8" cy="8" r="6.2" fill="none" stroke="#8a8a8a" stroke-width="1.2"/><path d="M8 7 V11.5" stroke="#8a8a8a" stroke-width="1.3"/><circle cx="8" cy="4.9" r="0.8" fill="#8a8a8a"/></svg>
<div class="t" style="top:1119.22px;font-size:21px;line-height:21px;left:1382.00px;">$61,483.53</div>
<div class="t" style="top:1119.22px;font-size:21px;line-height:21px;left:1572.40px;">$60,483.53</div>
<div class="r" style="left:1740px;top:1114px;width:67px;height:30px;background:#243e27;border-radius:15px;"></div>
<svg class="r" style="left:1752px;top:1122px;" width="17" height="17" viewBox="0 0 17 17"><path d="M8.2 2.6 V12.6 M3.6 8.4 L8.2 13 L12.8 8.4" fill="none" stroke="#2fb344" stroke-width="2.5" stroke-linecap="round" stroke-linejoin="round"/></svg>
<div class="t" style="top:1121.40px;font-size:15px;line-height:15px;color:#2fb344;left:1774.20px;-webkit-text-stroke:0.35px currentColor;transform:scaleX(0.86);transform-origin:left;">1%</div>
<div class="r" style="left:156px;top:1153px;width:1704px;height:47px;background:#1a1a1a;"></div>
<div class="r" style="left:156px;top:1200px;width:1704px;height:1px;background:#170f0f;"></div>
<svg class="r" style="left:187px;top:1166px;" width="23" height="23" viewBox="0 0 23 23"><rect x="0" y="0" width="23" height="23" rx="3" fill="#1976d2"/><path d="M4.5 11.5 L9.5 16.5 L19 7" fill="none" stroke="#1a1a1a" stroke-width="2.6"/></svg>
<div class="t" style="top:1167.22px;font-size:21px;line-height:21px;left:234.00px;">7.</div>
<div class="t" style="top:1167.80px;font-size:21.5px;line-height:21.5px;left:303.60px;">James McCarter</div>
<div class="t" style="top:1167.22px;font-size:21px;line-height:21px;left:556.50px;transform:scaleX(0.89);transform-origin:left;">CEO</div>
<div class="t" style="top:1167.22px;font-size:21px;line-height:21px;left:765.80px;">EMP001</div>
<div class="t" style="top:1167.65px;font-size:20.5px;line-height:20.5px;left:932.20px;">Yes</div>
<div class="t" style="top:1167.22px;font-size:21px;line-height:21px;left:1094.00px;">1</div>
<div class="r" style="left:1191px;top:1168px;width:75px;height:19px;background:#d50b08;"></div>
<div class="r" style="left:1266px;top:1168px;width:38px;height:19px;background:#4a8238;"></div>
<svg class="r" style="left:1308px;top:1170px;" width="16" height="16" viewBox="0 0 16 16"><circle cx="8" cy="8" r="6.2" fill="none" stroke="#8a8a8a" stroke-width="1.2"/><path d="M8 7 V11.5" stroke="#8a8a8a" stroke-width="1.3"/><circle cx="8" cy="4.9" r="0.8" fill="#8a8a8a"/></svg>
<div class="t" style="top:1167.22px;font-size:21px;line-height:21px;left:1382.00px;">$61,483.53</div>
<div class="t" style="top:1167.22px;font-size:21px;line-height:21px;left:1572.40px;">$60,483.53</div>
<div class="r" style="left:1740px;top:1162px;width:67px;height:30px;background:#243e27;border-radius:15px;"></div>
<svg class="r" style="left:1752px;top:1170px;" width="17" height="17" viewBox="0 0 17 17"><path d="M8.2 2.6 V12.6 M3.6 8.4 L8.2 13 L12.8 8.4" fill="none" stroke="#2fb344" stroke-width="2.5" stroke-linecap="round" stroke-linejoin="round"/></svg>
<div class="t" style="top:1169.40px;font-size:15px;line-height:15px;color:#2fb344;left:1774.20px;-webkit-text-stroke:0.35px currentColor;transform:scaleX(0.86);transform-origin:left;">1%</div>
<div class="r" style="left:156px;top:1201px;width:1704px;height:47px;background:#1a1a1a;"></div>
<div class="r" style="left:156px;top:1248px;width:1704px;height:1px;background:#170f0f;"></div>
<svg class="r" style="left:187px;top:1214px;" width="23" height="23" viewBox="0 0 23 23"><rect x="0" y="0" width="23" height="23" rx="3" fill="#1976d2"/><path d="M4.5 11.5 L9.5 16.5 L19 7" fill="none" stroke="#1a1a1a" stroke-width="2.6"/></svg>
<div class="t" style="top:1215.22px;font-size:21px;line-height:21px;left:234.00px;">8.</div>
<div class="t" style="top:1215.80px;font-size:21.5px;line-height:21.5px;left:303.60px;">James McCarter</div>
<div class="t" style="top:1215.22px;font-size:21px;line-height:21px;left:556.50px;transform:scaleX(0.89);transform-origin:left;">CEO</div>
<div class="t" style="top:1215.22px;font-size:21px;line-height:21px;left:765.80px;">EMP001</div>
<div class="t" style="top:1215.65px;font-size:20.5px;line-height:20.5px;left:932.20px;">Yes</div>
<div class="t" style="top:1215.22px;font-size:21px;line-height:21px;left:1094.00px;">1</div>
<div class="r" style="left:1191px;top:1216px;width:75px;height:19px;background:#d50b08;"></div>
<div class="r" style="left:1266px;top:1216px;width:38px;height:19px;background:#4a8238;"></div>
<svg class="r" style="left:1308px;top:1218px;" width="16" height="16" viewBox="0 0 16 16"><circle cx="8" cy="8" r="6.2" fill="none" stroke="#8a8a8a" stroke-width="1.2"/><path d="M8 7 V11.5" stroke="#8a8a8a" stroke-width="1.3"/><circle cx="8" cy="4.9" r="0.8" fill="#8a8a8a"/></svg>
<div class="t" style="top:1215.22px;font-size:21px;line-height:21px;left:1382.00px;">$61,483.53</div>
<div class="t" style="top:1215.22px;font-size:21px;line-height:21px;left:1572.40px;">$60,483.53</div>
<div class="r" style="left:1740px;top:1210px;width:67px;height:30px;background:#243e27;border-radius:15px;"></div>
<svg class="r" style="left:1752px;top:1218px;" width="17" height="17" viewBox="0 0 17 17"><path d="M8.2 2.6 V12.6 M3.6 8.4 L8.2 13 L12.8 8.4" fill="none" stroke="#2fb344" stroke-width="2.5" stroke-linecap="round" stroke-linejoin="round"/></svg>
<div class="t" style="top:1217.40px;font-size:15px;line-height:15px;color:#2fb344;left:1774.20px;-webkit-text-stroke:0.35px currentColor;transform:scaleX(0.86);transform-origin:left;">1%</div>
<div class="r" style="left:156px;top:1249px;width:1704px;height:47px;background:#1a1a1a;"></div>
<div class="r" style="left:156px;top:1296px;width:1704px;height:1px;background:#170f0f;"></div>
<svg class="r" style="left:187px;top:1262px;" width="23" height="23" viewBox="0 0 23 23"><rect x="0" y="0" width="23" height="23" rx="3" fill="#1976d2"/><path d="M4.5 11.5 L9.5 16.5 L19 7" fill="none" stroke="#1a1a1a" stroke-width="2.6"/></svg>
<div class="t" style="top:1263.22px;font-size:21px;line-height:21px;left:234.00px;">9.</div>
<div class="t" style="top:1263.80px;font-size:21.5px;line-height:21.5px;left:303.60px;">James McCarter</div>
<div class="t" style="top:1263.22px;font-size:21px;line-height:21px;left:556.50px;transform:scaleX(0.89);transform-origin:left;">CEO</div>
<div class="t" style="top:1263.22px;font-size:21px;line-height:21px;left:765.80px;">EMP001</div>
<div class="t" style="top:1263.65px;font-size:20.5px;line-height:20.5px;left:932.20px;">Yes</div>
<div class="t" style="top:1263.22px;font-size:21px;line-height:21px;left:1094.00px;">1</div>
<div class="r" style="left:1191px;top:1264px;width:75px;height:19px;background:#d50b08;"></div>
<div class="r" style="left:1266px;top:1264px;width:38px;height:19px;background:#4a8238;"></div>
<svg class="r" style="left:1308px;top:1266px;" width="16" height="16" viewBox="0 0 16 16"><circle cx="8" cy="8" r="6.2" fill="none" stroke="#8a8a8a" stroke-width="1.2"/><path d="M8 7 V11.5" stroke="#8a8a8a" stroke-width="1.3"/><circle cx="8" cy="4.9" r="0.8" fill="#8a8a8a"/></svg>
<div class="t" style="top:1263.22px;font-size:21px;line-height:21px;left:1382.00px;">$61,483.53</div>
<div class="t" style="top:1263.22px;font-size:21px;line-height:21px;left:1572.40px;">$60,483.53</div>
<div class="r" style="left:1740px;top:1258px;width:67px;height:30px;background:#243e27;border-radius:15px;"></div>
<svg class="r" style="left:1752px;top:1266px;" width="17" height="17" viewBox="0 0 17 17"><path d="M8.2 2.6 V12.6 M3.6 8.4 L8.2 13 L12.8 8.4" fill="none" stroke="#2fb344" stroke-width="2.5" stroke-linecap="round" stroke-linejoin="round"/></svg>
<div class="t" style="top:1265.40px;font-size:15px;line-height:15px;color:#2fb344;left:1774.20px;-webkit-text-stroke:0.35px currentColor;transform:scaleX(0.86);transform-origin:left;">1%</div>
<div class="r" style="left:156px;top:1297px;width:1704px;height:47px;background:#1a1a1a;"></div>
<div class="r" style="left:156px;top:1344px;width:1704px;height:1px;background:#170f0f;"></div>
<svg class="r" style="left:187px;top:1310px;" width="23" height="23" viewBox="0 0 23 23"><rect x="0" y="0" width="23" height="23" rx="3" fill="#1976d2"/><path d="M4.5 11.5 L9.5 16.5 L19 7" fill="none" stroke="#1a1a1a" stroke-width="2.6"/></svg>
<div class="t" style="top:1311.22px;font-size:21px;line-height:21px;left:234.00px;">10.</div>
<div class="t" style="top:1311.80px;font-size:21.5px;line-height:21.5px;left:303.60px;">James McCarter</div>
<div class="t" style="top:1311.22px;font-size:21px;line-height:21px;left:556.50px;transform:scaleX(0.89);transform-origin:left;">CEO</div>
<div class="t" style="top:1311.22px;font-size:21px;line-height:21px;left:765.80px;">EMP001</div>
<div class="t" style="top:1311.65px;font-size:20.5px;line-height:20.5px;left:932.20px;">Yes</div>
<div class="t" style="top:1311.22px;font-size:21px;line-height:21px;left:1094.00px;">1</div>
<div class="r" style="left:1191px;top:1312px;width:75px;height:19px;background:#d50b08;"></div>
<div class="r" style="left:1266px;top:1312px;width:38px;height:19px;background:#4a8238;"></div>
<svg class="r" style="left:1308px;top:1314px;" width="16" height="16" viewBox="0 0 16 16"><circle cx="8" cy="8" r="6.2" fill="none" stroke="#8a8a8a" stroke-width="1.2"/><path d="M8 7 V11.5" stroke="#8a8a8a" stroke-width="1.3"/><circle cx="8" cy="4.9" r="0.8" fill="#8a8a8a"/></svg>
<div class="t" style="top:1311.22px;font-size:21px;line-height:21px;left:1382.00px;">$61,483.53</div>
<div class="t" style="top:1311.22px;font-size:21px;line-height:21px;left:1572.40px;">$60,483.53</div>
<div class="r" style="left:1740px;top:1306px;width:67px;height:30px;background:#243e27;border-radius:15px;"></div>
<svg class="r" style="left:1752px;top:1314px;" width="17" height="17" viewBox="0 0 17 17"><path d="M8.2 2.6 V12.6 M3.6 8.4 L8.2 13 L12.8 8.4" fill="none" stroke="#2fb344" stroke-width="2.5" stroke-linecap="round" stroke-linejoin="round"/></svg>
<div class="t" style="top:1313.40px;font-size:15px;line-height:15px;color:#2fb344;left:1774.20px;-webkit-text-stroke:0.35px currentColor;transform:scaleX(0.86);transform-origin:left;">1%</div>
<div class="r" style="left:156px;top:1345px;width:1704px;height:47px;background:#1a1a1a;"></div>
<div class="r" style="left:156px;top:1392px;width:1704px;height:1px;background:#170f0f;"></div>
<svg class="r" style="left:187px;top:1358px;" width="23" height="23" viewBox="0 0 23 23"><rect x="0" y="0" width="23" height="23" rx="3" fill="#1976d2"/><path d="M4.5 11.5 L9.5 16.5 L19 7" fill="none" stroke="#1a1a1a" stroke-width="2.6"/></svg>
<div class="t" style="top:1359.22px;font-size:21px;line-height:21px;left:234.00px;">11.</div>
<div class="t" style="top:1359.80px;font-size:21.5px;line-height:21.5px;left:303.60px;">James McCarter</div>
<div class="t" style="top:1359.22px;font-size:21px;line-height:21px;left:556.50px;transform:scaleX(0.89);transform-origin:left;">CEO</div>
<div class="t" style="top:1359.22px;font-size:21px;line-height:21px;left:765.80px;">EMP001</div>
<div class="t" style="top:1359.65px;font-size:20.5px;line-height:20.5px;left:932.20px;">Yes</div>
<div class="t" style="top:1359.22px;font-size:21px;line-height:21px;left:1094.00px;">1</div>
<div class="r" style="left:1191px;top:1360px;width:75px;height:19px;background:#d50b08;"></div>
<div class="r" style="left:1266px;top:1360px;width:38px;height:19px;background:#4a8238;"></div>
<svg class="r" style="left:1308px;top:1362px;" width="16" height="16" viewBox="0 0 16 16"><circle cx="8" cy="8" r="6.2" fill="none" stroke="#8a8a8a" stroke-width="1.2"/><path d="M8 7 V11.5" stroke="#8a8a8a" stroke-width="1.3"/><circle cx="8" cy="4.9" r="0.8" fill="#8a8a8a"/></svg>
<div class="t" style="top:1359.22px;font-size:21px;line-height:21px;left:1382.00px;">$61,483.53</div>
<div class="t" style="top:1359.22px;font-size:21px;line-height:21px;left:1572.40px;">$60,483.53</div>
<div class="r" style="left:1740px;top:1354px;width:67px;height:30px;background:#243e27;border-radius:15px;"></div>
<svg class="r" style="left:1752px;top:1362px;" width="17" height="17" viewBox="0 0 17 17"><path d="M8.2 2.6 V12.6 M3.6 8.4 L8.2 13 L12.8 8.4" fill="none" stroke="#2fb344" stroke-width="2.5" stroke-linecap="round" stroke-linejoin="round"/></svg>
<div class="t" style="top:1361.40px;font-size:15px;line-height:15px;color:#2fb344;left:1774.20px;-webkit-text-stroke:0.35px currentColor;transform:scaleX(0.86);transform-origin:left;">1%</div>
<div class="r" style="left:156px;top:1393px;width:1704px;height:47px;background:#1a1a1a;"></div>
<div class="r" style="left:156px;top:1440px;width:1704px;height:1px;background:#170f0f;"></div>
<svg class="r" style="left:187px;top:1406px;" width="23" height="23" viewBox="0 0 23 23"><rect x="0" y="0" width="23" height="23" rx="3" fill="#1976d2"/><path d="M4.5 11.5 L9.5 16.5 L19 7" fill="none" stroke="#1a1a1a" stroke-width="2.6"/></svg>
<div class="t" style="top:1407.22px;font-size:21px;line-height:21px;left:234.00px;">12.</div>
<div class="t" style="top:1407.80px;font-size:21.5px;line-height:21.5px;left:303.60px;">James McCarter</div>
<div class="t" style="top:1407.22px;font-size:21px;line-height:21px;left:556.50px;transform:scaleX(0.89);transform-origin:left;">CEO</div>
<div class="t" style="top:1407.22px;font-size:21px;line-height:21px;left:765.80px;">EMP001</div>
<div class="t" style="top:1407.65px;font-size:20.5px;line-height:20.5px;left:932.20px;">Yes</div>
<div class="t" style="top:1407.22px;font-size:21px;line-height:21px;left:1094.00px;">1</div>
<div class="r" style="left:1191px;top:1408px;width:75px;height:19px;background:#d50b08;"></div>
<div class="r" style="left:1266px;top:1408px;width:38px;height:19px;background:#4a8238;"></div>
<svg class="r" style="left:1308px;top:1410px;" width="16" height="16" viewBox="0 0 16 16"><circle cx="8" cy="8" r="6.2" fill="none" stroke="#8a8a8a" stroke-width="1.2"/><path d="M8 7 V11.5" stroke="#8a8a8a" stroke-width="1.3"/><circle cx="8" cy="4.9" r="0.8" fill="#8a8a8a"/></svg>
<div class="t" style="top:1407.22px;font-size:21px;line-height:21px;left:1382.00px;">$61,483.53</div>
<div class="t" style="top:1407.22px;font-size:21px;line-height:21px;left:1572.40px;">$60,483.53</div>
<div class="r" style="left:1740px;top:1402px;width:67px;height:30px;background:#243e27;border-radius:15px;"></div>
<svg class="r" style="left:1752px;top:1410px;" width="17" height="17" viewBox="0 0 17 17"><path d="M8.2 2.6 V12.6 M3.6 8.4 L8.2 13 L12.8 8.4" fill="none" stroke="#2fb344" stroke-width="2.5" stroke-linecap="round" stroke-linejoin="round"/></svg>
<div class="t" style="top:1409.40px;font-size:15px;line-height:15px;color:#2fb344;left:1774.20px;-webkit-text-stroke:0.35px currentColor;transform:scaleX(0.86);transform-origin:left;">1%</div>
<div class="r" style="left:156px;top:1441px;width:1704px;height:47px;background:#1a1a1a;"></div>
<div class="r" style="left:156px;top:1488px;width:1704px;height:1px;background:#170f0f;"></div>
<svg class="r" style="left:187px;top:1454px;" width="23" height="23" viewBox="0 0 23 23"><rect x="0" y="0" width="23" height="23" rx="3" fill="#1976d2"/><path d="M4.5 11.5 L9.5 16.5 L19 7" fill="none" stroke="#1a1a1a" stroke-width="2.6"/></svg>
<div class="t" style="top:1455.22px;font-size:21px;line-height:21px;left:234.00px;">13.</div>
<div class="t" style="top:1455.80px;font-size:21.5px;line-height:21.5px;left:303.60px;">James McCarter</div>
<div class="t" style="top:1455.22px;font-size:21px;line-height:21px;left:556.50px;transform:scaleX(0.89);transform-origin:left;">CEO</div>
<div class="t" style="top:1455.22px;font-size:21px;line-height:21px;left:765.80px;">EMP001</div>
<div class="t" style="top:1455.65px;font-size:20.5px;line-height:20.5px;left:932.20px;">Yes</div>
<div class="t" style="top:1455.22px;font-size:21px;line-height:21px;left:1094.00px;">1</div>
<div class="r" style="left:1191px;top:1456px;width:75px;height:19px;background:#d50b08;"></div>
<div class="r" style="left:1266px;top:1456px;width:38px;height:19px;background:#4a8238;"></div>
<svg class="r" style="left:1308px;top:1458px;" width="16" height="16" viewBox="0 0 16 16"><circle cx="8" cy="8" r="6.2" fill="none" stroke="#8a8a8a" stroke-width="1.2"/><path d="M8 7 V11.5" stroke="#8a8a8a" stroke-width="1.3"/><circle cx="8" cy="4.9" r="0.8" fill="#8a8a8a"/></svg>
<div class="t" style="top:1455.22px;font-size:21px;line-height:21px;left:1382.00px;">$61,483.53</div>
<div class="t" style="top:1455.22px;font-size:21px;line-height:21px;left:1572.40px;">$60,483.53</div>
<div class="r" style="left:1740px;top:1450px;width:67px;height:30px;background:#243e27;border-radius:15px;"></div>
<svg class="r" style="left:1752px;top:1458px;" width="17" height="17" viewBox="0 0 17 17"><path d="M8.2 2.6 V12.6 M3.6 8.4 L8.2 13 L12.8 8.4" fill="none" stroke="#2fb344" stroke-width="2.5" stroke-linecap="round" stroke-linejoin="round"/></svg>
<div class="t" style="top:1457.40px;font-size:15px;line-height:15px;color:#2fb344;left:1774.20px;-webkit-text-stroke:0.35px currentColor;transform:scaleX(0.86);transform-origin:left;">1%</div>
<div class="r" style="left:156px;top:1489px;width:1704px;height:47px;background:#1a1a1a;"></div>
<div class="r" style="left:156px;top:1536px;width:1704px;height:1px;background:#170f0f;"></div>
<svg class="r" style="left:187px;top:1502px;" width="23" height="23" viewBox="0 0 23 23"><rect x="0" y="0" width="23" height="23" rx="3" fill="#1976d2"/><path d="M4.5 11.5 L9.5 16.5 L19 7" fill="none" stroke="#1a1a1a" stroke-width="2.6"/></svg>
<div class="t" style="top:1503.22px;font-size:21px;line-height:21px;left:234.00px;">14.</div>
<div class="t" style="top:1503.80px;font-size:21.5px;line-height:21.5px;left:303.60px;">James McCarter</div>
<div class="t" style="top:1503.22px;font-size:21px;line-height:21px;left:556.50px;transform:scaleX(0.89);transform-origin:left;">CEO</div>
<div class="t" style="top:1503.22px;font-size:21px;line-height:21px;left:765.80px;">EMP001</div>
<div class="t" style="top:1503.65px;font-size:20.5px;line-height:20.5px;left:932.20px;">Yes</div>
<div class="t" style="top:1503.22px;font-size:21px;line-height:21px;left:1094.00px;">1</div>
<div class="r" style="left:1191px;top:1504px;width:75px;height:19px;background:#d50b08;"></div>
<div class="r" style="left:1266px;top:1504px;width:38px;height:19px;background:#4a8238;"></div>
<svg class="r" style="left:1308px;top:1506px;" width="16" height="16" viewBox="0 0 16 16"><circle cx="8" cy="8" r="6.2" fill="none" stroke="#8a8a8a" stroke-width="1.2"/><path d="M8 7 V11.5" stroke="#8a8a8a" stroke-width="1.3"/><circle cx="8" cy="4.9" r="0.8" fill="#8a8a8a"/></svg>
<div class="t" style="top:1503.22px;font-size:21px;line-height:21px;left:1382.00px;">$61,483.53</div>
<div class="t" style="top:1503.22px;font-size:21px;line-height:21px;left:1572.40px;">$60,483.53</div>
<div class="r" style="left:1740px;top:1498px;width:67px;height:30px;background:#243e27;border-radius:15px;"></div>
<svg class="r" style="left:1752px;top:1506px;" width="17" height="17" viewBox="0 0 17 17"><path d="M8.2 2.6 V12.6 M3.6 8.4 L8.2 13 L12.8 8.4" fill="none" stroke="#2fb344" stroke-width="2.5" stroke-linecap="round" stroke-linejoin="round"/></svg>
<div class="t" style="top:1505.40px;font-size:15px;line-height:15px;color:#2fb344;left:1774.20px;-webkit-text-stroke:0.35px currentColor;transform:scaleX(0.86);transform-origin:left;">1%</div>
</body></html>
